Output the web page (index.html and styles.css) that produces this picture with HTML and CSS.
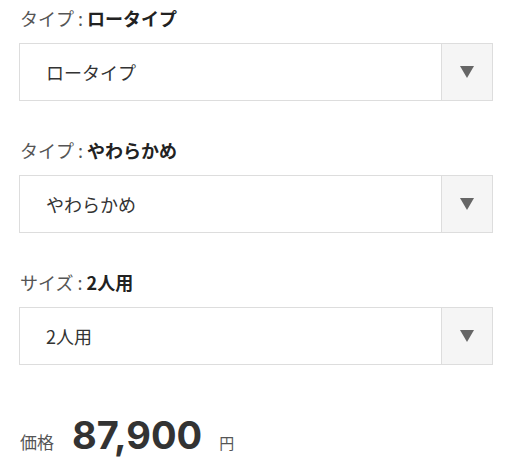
FILE: index.html
```html
<!DOCTYPE html>
<html lang="ja">
<head>
<meta charset="utf-8">
<link rel="stylesheet" href="styles.css">
</head>
<body>
<div class="page">
  <div class="field">
    <div class="label">タイプ : <b>ロータイプ</b></div>
    <div class="select">
      <span class="value">ロータイプ</span>
      <span class="arrow"><svg width="14" height="12" viewBox="0 0 14 12"><path d="M0 0H14L7 12Z" fill="#666"/></svg></span>
    </div>
  </div>
  <div class="field">
    <div class="label">タイプ : <b>やわらかめ</b></div>
    <div class="select">
      <span class="value">やわらかめ</span>
      <span class="arrow"><svg width="14" height="12" viewBox="0 0 14 12"><path d="M0 0H14L7 12Z" fill="#666"/></svg></span>
    </div>
  </div>
  <div class="field">
    <div class="label">サイズ : <b>2人用</b></div>
    <div class="select">
      <span class="value">2人用</span>
      <span class="arrow"><svg width="14" height="12" viewBox="0 0 14 12"><path d="M0 0H14L7 12Z" fill="#666"/></svg></span>
    </div>
  </div>
  <div class="price">
    <span class="price-label">価格</span>
    <span class="price-num">87,900</span>
    <span class="price-yen">円</span>
  </div>
</div>
</body>
</html>
```
FILE: styles.css
```css
html, body {
  margin: 0;
  padding: 0;
  background: #fff;
}
body {
  font-family: "Noto Sans CJK JP", "Noto Sans", sans-serif;
  color: #333;
}
.page {
  padding: 6px 19px 0 19px;
  width: 474px;
}
.field {
  margin-bottom: 37px;
}
.label {
  font-size: 18px;
  line-height: 24px;
  color: #555;
  padding-left: 1px;
  margin-bottom: 13px;
}
.label b {
  color: #222;
  font-weight: 700;
}
.select {
  display: flex;
  height: 58px;
  box-sizing: border-box;
  border: 1px solid #ddd;
  background: #fff;
}
.value {
  flex: 1;
  display: flex;
  align-items: center;
  padding-left: 26px;
  font-size: 18px;
  color: #333;
}
.arrow {
  width: 50px;
  border-left: 1px solid #ddd;
  background: #f5f5f5;
  display: flex;
  align-items: center;
  justify-content: center;
}
.price {
  display: flex;
  align-items: baseline;
  margin-top: 47px;
  padding-left: 1px;
}
.price-label {
  font-size: 17px;
  color: #555;
}
.price-num {
  font-family: Inter, "Liberation Sans", sans-serif;
  font-weight: 700;
  font-size: 38px;
  color: #333;
  margin-left: 18px;
}
.price-yen {
  font-size: 15px;
  color: #555;
  margin-left: 17px;
}
```
